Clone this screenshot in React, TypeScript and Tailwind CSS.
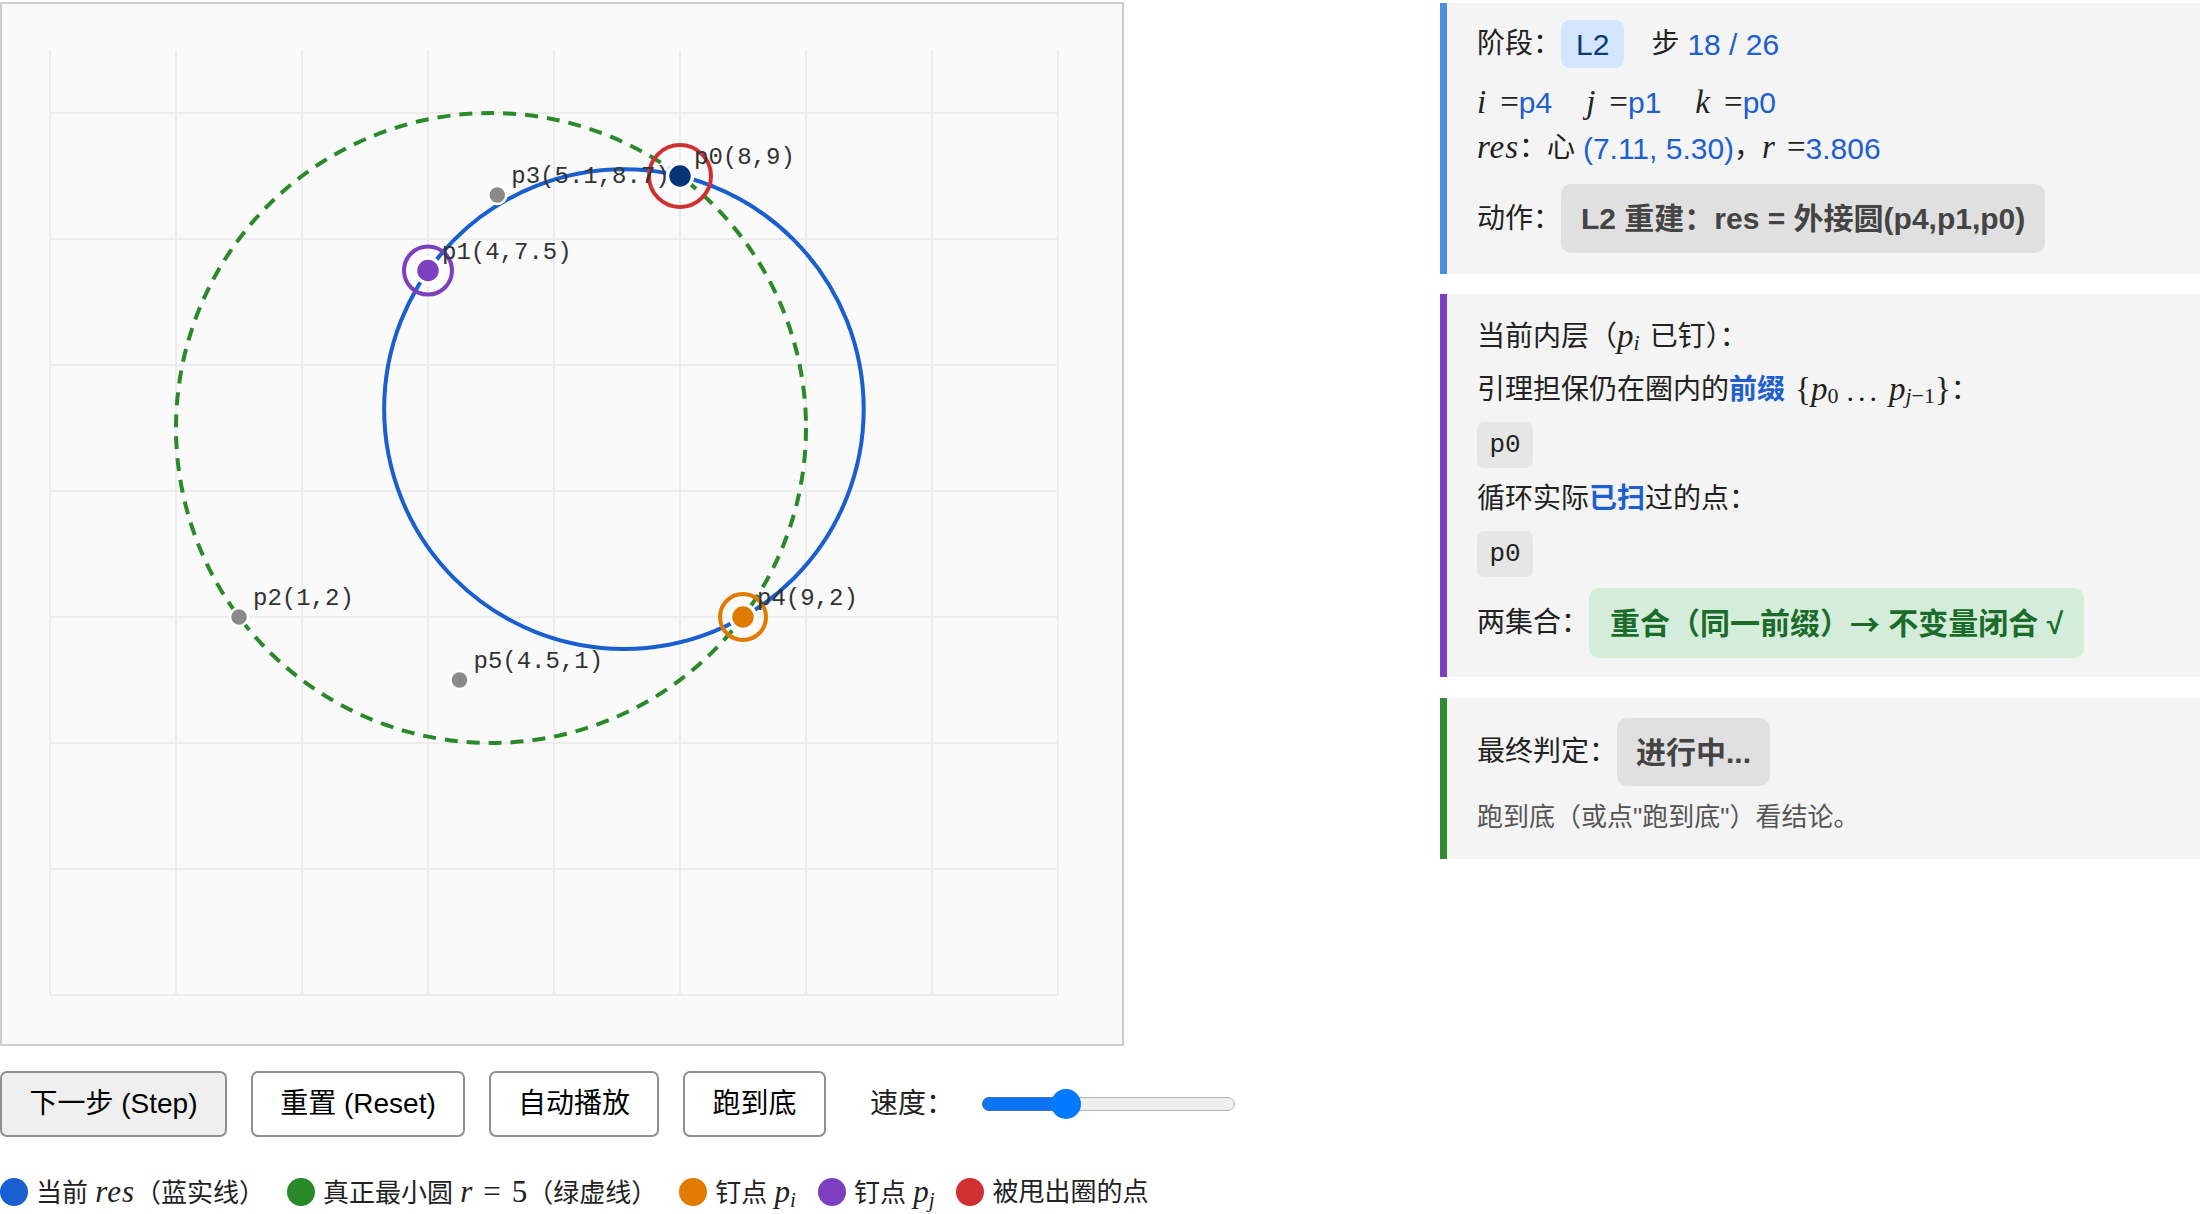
import React from 'react';

// canvas mapping: world units -> svg px
const X = (x: number) => 174 + 63 * x;
const Y = (y: number) => 739 - 63 * y;

type Pt = { name: string; x: number; y: number; label: string };

const POINTS: Pt[] = [
  { name: 'p0', x: 8, y: 9, label: 'p0(8,9)' },
  { name: 'p1', x: 4, y: 7.5, label: 'p1(4,7.5)' },
  { name: 'p2', x: 1, y: 2, label: 'p2(1,2)' },
  { name: 'p3', x: 5.1, y: 8.7, label: 'p3(5.1,8.7)' },
  { name: 'p4', x: 9, y: 2, label: 'p4(9,2)' },
  { name: 'p5', x: 4.5, y: 1, label: 'p5(4.5,1)' },
];

const SPECIAL: Record<string, { fill: string; ring: string; r: number }> = {
  p0: { fill: '#0a347a', ring: '#d03030', r: 31 },
  p1: { fill: '#7b3fbf', ring: '#7b3fbf', r: 24 },
  p4: { fill: '#e07b00', ring: '#e07b00', r: 23 },
};

const M = ({ children, className = '' }: { children: React.ReactNode; className?: string }) => (
  <span className={`font-[family-name:'Liberation_Serif',serif] italic ${className}`}>{children}</span>
);

const Serif = ({ children, className = '' }: { children: React.ReactNode; className?: string }) => (
  <span className={`font-[family-name:'Liberation_Serif',serif] ${className}`}>{children}</span>
);

const Blue = ({ children, bold }: { children: React.ReactNode; bold?: boolean }) => (
  <span className={`text-[#1d5fd0] ${bold ? 'font-bold' : 'text-[30px]'}`}>{children}</span>
);

function Board() {
  const vLines = [];
  for (let gx = -2; gx <= 14; gx += 2) {
    vLines.push(<line key={`v${gx}`} x1={X(gx)} y1={Y(11)} x2={X(gx)} y2={Y(-4)} stroke="#ececec" strokeWidth={2} />);
  }
  const hLines = [];
  for (let gy = -4; gy <= 10; gy += 2) {
    hLines.push(<line key={`h${gy}`} x1={X(-2)} y1={Y(gy)} x2={X(14)} y2={Y(gy)} stroke="#ececec" strokeWidth={2} />);
  }

  return (
    <svg width={1120} height={1040} className="block">
      {vLines}
      {hLines}
      {/* true min circle */}
      <circle cx={X(5)} cy={Y(5)} r={315} fill="none" stroke="#2a8a2a" strokeWidth={4} strokeDasharray="13 9" />
      {/* current res */}
      <circle cx={X(7.11)} cy={Y(5.3)} r={3.806 * 63} fill="none" stroke="#1a5fd0" strokeWidth={4} />

      {POINTS.map((p) => {
        const s = SPECIAL[p.name];
        if (!s) {
          return <circle key={p.name} cx={X(p.x)} cy={Y(p.y)} r={9} fill="#8a8a8a" stroke="#fff" strokeWidth={2.5} />;
        }
        return (
          <g key={p.name}>
            <circle cx={X(p.x)} cy={Y(p.y)} r={s.r} fill="none" stroke={s.ring} strokeWidth={4} />
            <circle cx={X(p.x)} cy={Y(p.y)} r={12.5} fill={s.fill} stroke="#fff" strokeWidth={3.5} />
          </g>
        );
      })}

      {POINTS.map((p) => (
        <text
          key={`t${p.name}`}
          x={X(p.x) + 14}
          y={Y(p.y) - 12}
          fontFamily="'Liberation Mono', monospace"
          fontSize={24}
          fill="#333"
        >
          {p.label}
        </text>
      ))}
    </svg>
  );
}

function Btn({ children, w, gray }: { children: React.ReactNode; w: string; gray?: boolean }) {
  return (
    <button
      className={`${w} shrink-0 h-[66px] flex items-center justify-center border-2 border-[#8f8f8f] rounded-[7px] text-[28px] text-black ${
        gray ? 'bg-[#efefef]' : 'bg-white'
      }`}
    >
      {children}
    </button>
  );
}

function LegendItem({ color, children }: { color: string; children: React.ReactNode }) {
  return (
    <div className="flex items-center gap-[8px] shrink-0">
      <span className={`w-[28px] h-[28px] rounded-full ${color}`} />
      <span className="whitespace-nowrap">{children}</span>
    </div>
  );
}

function CodeBox({ children }: { children: React.ReactNode }) {
  return (
    <div className="w-[56px] h-[46px] rounded-[7px] bg-[#e6e6e6] flex items-center justify-center font-[family-name:'Liberation_Mono',monospace] text-[26px] text-[#222]">
      {children}
    </div>
  );
}

export default function App() {
  return (
    <div className="w-[2200px] h-[1214px] bg-white flex justify-between pt-[2px] overflow-hidden text-[#222] font-[family-name:'Liberation_Sans','Noto_Sans_CJK_SC',sans-serif]">
      {/* left column */}
      <div className="w-[1260px] shrink-0">
        <div className="w-[1124px] border-2 border-[#cccccc] bg-[#fafafa]">
          <Board />
        </div>

        <div className="mt-[25px] flex items-center gap-[24px]">
          <Btn w="w-[227px]" gray>
            下一步 (Step)
          </Btn>
          <Btn w="w-[214px]">重置 (Reset)</Btn>
          <Btn w="w-[170px]">自动播放</Btn>
          <Btn w="w-[143px]">跑到底</Btn>
          <span className="ml-[20px] text-[28px] whitespace-nowrap shrink-0">速度：</span>
          <div className="relative ml-[4px] w-[253px] h-[30px] shrink-0">
            <div className="absolute left-0 right-0 top-[8px] h-[14px] rounded-full bg-[#efefef] border-[1.5px] border-[#b5b5b5]" />
            <div className="absolute left-0 w-[88px] top-[8px] h-[14px] rounded-full bg-[#0a74f5] border-[1.5px] border-[#3f6fbe]" />
            <div className="absolute left-[69px] top-0 w-[30px] h-[30px] rounded-full bg-[#007aff]" />
          </div>
        </div>

        <div className="mt-[40px] h-[30px] flex items-center gap-[22px] text-[26px] text-[#222]">
          <LegendItem color="bg-[#1a5fd0]">
            当前 <M className="text-[31px] tracking-[1px]">res</M>（蓝实线）
          </LegendItem>
          <LegendItem color="bg-[#2a8a2a]">
            真正最小圆 <M className="text-[31px]">r</M>
            <Serif className="text-[31px] mx-[11px]">=</Serif>
            <Serif className="text-[31px]">5</Serif>（绿虚线）
          </LegendItem>
          <LegendItem color="bg-[#e07b00]">
            钉点 <M className="text-[31px]">p</M>
            <sub className="font-[family-name:'Liberation_Serif',serif] italic text-[21px]">i</sub>
          </LegendItem>
          <LegendItem color="bg-[#7b3fbf]">
            钉点 <M className="text-[31px]">p</M>
            <sub className="font-[family-name:'Liberation_Serif',serif] italic text-[21px]">j</sub>
          </LegendItem>
          <LegendItem color="bg-[#d03030]">被甩出圈的点</LegendItem>
        </div>
      </div>

      {/* right column */}
      <div className="w-[760px] shrink-0 mt-[1px] text-[28px]">
        <div className="bg-[#f4f4f4] border-l-[7px] border-[#4a90e2] pl-[30px] pt-[17px] pb-[21px]">
          <div className="flex items-center h-[48px]">
            <span>阶段：</span>
            <span className="h-[48px] px-[15px] rounded-[9px] bg-[#d4e6fc] text-[#0f3a78] text-[30px] flex items-center">L2</span>
            <span className="ml-[27px]">步</span>
            <span className="ml-[8px]">
              <Blue>18 / 26</Blue>
            </span>
          </div>
          <div className="mt-[15px] h-[40px] flex items-center gap-[34px]">
            <span>
              <M className="text-[33px]">i</M>
              <Serif className="text-[33px] ml-[14px]">=</Serif>
              <Blue>p4</Blue>
            </span>
            <span>
              <M className="text-[33px]">j</M>
              <Serif className="text-[33px] ml-[14px]">=</Serif>
              <Blue>p1</Blue>
            </span>
            <span>
              <M className="text-[33px]">k</M>
              <Serif className="text-[33px] ml-[14px]">=</Serif>
              <Blue>p0</Blue>
            </span>
          </div>
          <div className="mt-[5px] h-[40px] flex items-center whitespace-pre">
            <M className="text-[33px] tracking-[1px]">res</M>
            <span>：心 </span>
            <Blue>(7.11, 5.30)</Blue>
            <span>，</span>
            <M className="text-[33px]">r</M>
            <Serif className="text-[33px] ml-[12px]">=</Serif>
            <Blue>3.806</Blue>
          </div>
          <div className="mt-[16px] flex items-center">
            <span>动作：</span>
            <span className="h-[69px] px-[20px] rounded-[10px] bg-[#e0e0e0] text-[#444] text-[30px] font-bold flex items-center whitespace-pre">
              L2 重建：res = 外接圆(p4,p1,p0)
            </span>
          </div>
        </div>

        <div className="mt-[20px] bg-[#f4f4f4] border-l-[7px] border-[#7b3fbf] pl-[30px] pt-[23px] pb-[19px]">
          <div className="h-[40px] flex items-center">
            当前内层（<M className="text-[33px]">p</M>
            <sub className="font-[family-name:'Liberation_Serif',serif] italic text-[22px]">i</sub>
            <span className="ml-[10px]">已钉）：</span>
          </div>
          <div className="mt-[13px] h-[40px] flex items-center">
            引理担保仍在圈内的<Blue bold>前缀</Blue>
            <Serif className="text-[33px] ml-[10px]">{'{'}</Serif>
            <M className="text-[33px]">p</M>
            <sub className="font-[family-name:'Liberation_Serif',serif] text-[22px]">0</sub>
            <Serif className="text-[30px] mx-[8px] tracking-[4px]">...</Serif>
            <M className="text-[33px]">p</M>
            <sub className="font-[family-name:'Liberation_Serif',serif] text-[22px]">
              <span className="italic">j</span>−1
            </sub>
            <Serif className="text-[33px]">{'}'}</Serif>
            <span>：</span>
          </div>
          <div className="mt-[12px]">
            <CodeBox>p0</CodeBox>
          </div>
          <div className="mt-[11px] h-[40px] flex items-center">
            循环实际<Blue bold>已扫</Blue>过的点：
          </div>
          <div className="mt-[12px]">
            <CodeBox>p0</CodeBox>
          </div>
          <div className="mt-[11px] flex items-center">
            <span>两集合：</span>
            <span className="h-[70px] px-[21px] rounded-[10px] bg-[#d4edda] text-[#1b6b2a] text-[30px] font-bold flex items-center whitespace-pre">
              重合（同一前缀）<span className="font-[family-name:'Noto_Sans_CJK_SC',sans-serif]">→</span> 不变量闭合 √
            </span>
          </div>
        </div>

        <div className="mt-[21px] bg-[#f4f4f4] border-l-[7px] border-[#2e8b2e] pl-[30px] pt-[20px] pb-[22px]">
          <div className="flex items-center">
            <span>最终判定：</span>
            <span className="h-[68px] px-[19px] rounded-[10px] bg-[#e0e0e0] text-[#444] text-[30px] font-bold flex items-center">
              进行中...
            </span>
          </div>
          <div className="mt-[11px] h-[40px] flex items-center text-[26px] text-[#555]">
            跑到底（或点"跑到底"）看结论。
          </div>
        </div>
      </div>
    </div>
  );
}
